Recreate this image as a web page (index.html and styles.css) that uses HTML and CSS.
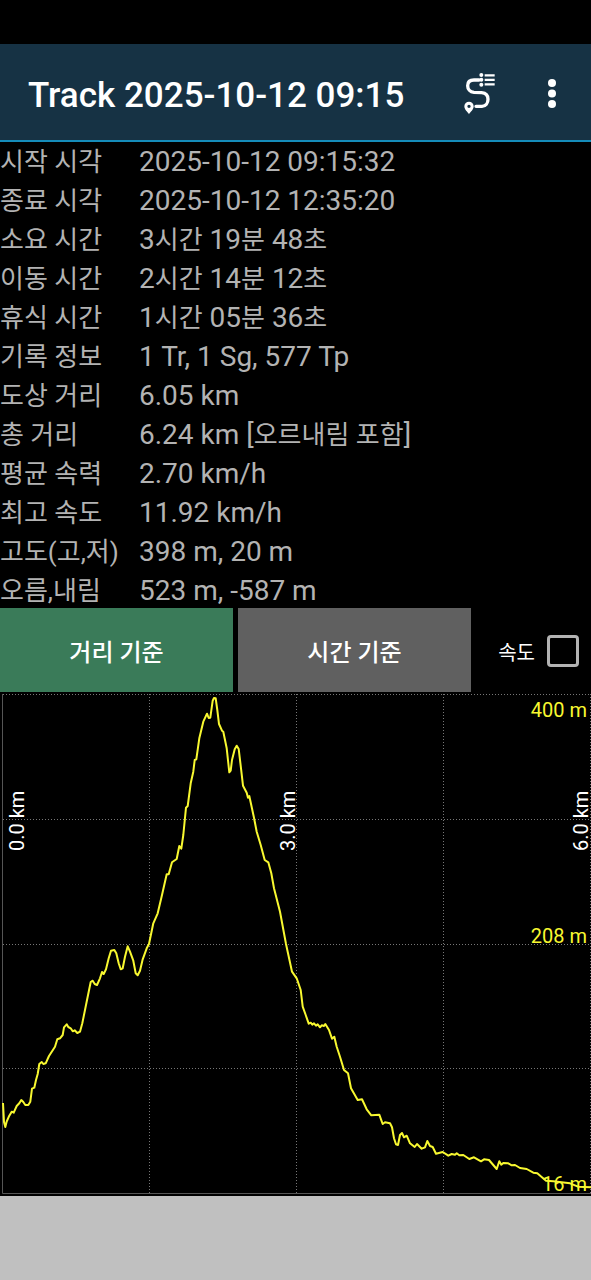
FILE: index.html
```html
<!DOCTYPE html>
<html lang="ko">
<head>
<meta charset="utf-8">
<meta name="viewport" content="width=device-width, initial-scale=1">
<title>Track 2025-10-12 09:15</title>
<link rel="stylesheet" href="styles.css">
</head>
<body>
<header class="app-bar">
  <h1 class="title">Track 2025-10-12 09:15</h1>
  <button class="icon-button" type="button" aria-label="트랙 목록">
    <svg class="icon-route" viewBox="45 38 96 126" aria-hidden="true">
      <path class="route" d="M90 59H75C62 59 56 66 56 76S63 95 75 96L98 97C111 98 117 106 117 117S110 138 99 138H81"/>
      <path class="rows" d="M107 45H137M107 58.500H137M107 72H137"/>
      <circle cx="97" cy="44" r="6"/><circle cx="97" cy="58.500" r="6"/><circle cx="97" cy="73" r="6"/>
      <path fill-rule="evenodd" d="M60 162C56 155 46 148 46 138A14 14 0 0 1 74 138C74 148 64 155 60 162ZM60 133A5 5 0 1 0 60 143A5 5 0 1 0 60 133Z"/>
    </svg>
  </button>
  <button class="icon-button" type="button" aria-label="메뉴">
    <svg class="icon-more" viewBox="0 0 10 32" aria-hidden="true">
      <circle cx="5" cy="5" r="4"/><circle cx="5" cy="15.500" r="4"/><circle cx="5" cy="26" r="4"/>
    </svg>
  </button>
</header>
<main class="content">
  <table class="stats">
    <tbody>
      <tr><th scope="row">시작 시각</th><td>2025-10-12 09:15:32</td></tr>
      <tr><th scope="row">종료 시각</th><td>2025-10-12 12:35:20</td></tr>
      <tr><th scope="row">소요 시간</th><td>3<span class="ko">시간</span> 19<span class="ko">분</span> 48<span class="ko">초</span></td></tr>
      <tr><th scope="row">이동 시간</th><td>2<span class="ko">시간</span> 14<span class="ko">분</span> 12<span class="ko">초</span></td></tr>
      <tr><th scope="row">휴식 시간</th><td>1<span class="ko">시간</span> 05<span class="ko">분</span> 36<span class="ko">초</span></td></tr>
      <tr><th scope="row">기록 정보</th><td>1 Tr, 1 Sg, 577 Tp</td></tr>
      <tr><th scope="row">도상 거리</th><td>6.05 km</td></tr>
      <tr><th scope="row">총 거리</th><td>6.24 km [<span class="ko">오르내림 포함</span>]</td></tr>
      <tr><th scope="row">평균 속력</th><td>2.70 km/h</td></tr>
      <tr><th scope="row">최고 속도</th><td>11.92 km/h</td></tr>
      <tr><th scope="row">고도(고,저)</th><td>398 m, 20 m</td></tr>
      <tr><th scope="row">오름,내림</th><td>523 m, -587 m</td></tr>
    </tbody>
  </table>
  <div class="controls">
    <button class="mode mode-active" type="button">거리 기준</button>
    <button class="mode" type="button">시간 기준</button>
    <label class="speed" for="speed">속도 <input class="check" id="speed" type="checkbox"></label>
  </div>
  <svg class="chart" viewBox="0 692 591 504" role="img" aria-label="고도 그래프">
    <path class="grid" d="M3 694.500H591M3 819.500H591M3 944.500H591M3 1068.500H591M149.500 694V1193M296.500 694V1193M443.500 694V1193M590.500 694V1193"/>
    <path class="axis" d="M2.500 694V1193.500H591"/>
    <text class="alt" x="587" y="717">400 m</text>
    <text class="alt" x="587" y="943">208 m</text>
    <text class="alt" x="587" y="1191">16 m</text>
    <text class="dist" transform="translate(24 851) rotate(-90)">0.0 km</text>
    <text class="dist" transform="translate(295 851) rotate(-90)">3.0 km</text>
    <text class="dist" transform="translate(588 851) rotate(-90)">6.0 km</text>
    <polyline class="profile" points="3,1103 4,1122 5.3,1127 6.7,1121.5 9.3,1115.7 11.7,1111.7 13.7,1112.7 16.7,1106 19.3,1103.3 21.3,1100 23.3,1102 25.3,1105 28.3,1105 30.3,1101.7 32,1088.7 34.3,1087.7 36,1080 37.7,1074 39.3,1064 41.7,1062 43.3,1064 45.7,1063.3 49,1056 55,1046.7 57.3,1039.3 60,1038.3 62.7,1035 64,1027.3 66.7,1024.3 68.3,1027 70.7,1028.3 72.7,1031.3 74.7,1030.3 77.3,1033 80,1031.7 82.3,1023.3 86,1005 90.7,982 92.7,980.7 94.7,984 97,985 100,978.3 102,972 103.7,974 106,969.3 108.7,958.3 111,950.7 114.3,950 116.3,953.3 118.7,963.3 120.7,969.3 122.7,968.3 125,956.7 127.7,946.3 130,951.7 133.3,960.7 135.7,973.3 137.7,975.3 140,970.7 142.7,959.3 146.7,948.3 149,944 153.3,923.3 157.7,913.3 162,895 166.7,874.3 168.7,874.3 172,862.3 176.7,859 179.3,846 181.3,848.7 183.3,835 186,807.7 187.7,806 190.7,783.3 193.3,771.7 194.7,760 196.3,759.3 199.3,738.3 203.3,721.7 207,713.7 208.7,718 210.3,717.7 212.7,700.7 214,698 215.7,698.3 217.3,710 219,724 222,730.7 223.3,731.7 226.7,748.3 229.3,772.3 230.7,770.7 232,760 234.7,749.3 236.7,745.7 238.7,749 241,768.3 243,785.7 246.7,792.7 248,797.7 249.3,796 254,817.7 256.7,831.7 260.7,845 264.7,860 268.3,862.3 271.3,873.3 274,888.3 280,911.7 286,944 292,971.7 296.7,978.3 300.7,990 302.7,1006.7 305.7,1015 308.7,1023.7 310.7,1022.7 312.3,1024.7 314,1023.3 316,1025.7 317.7,1024.3 320,1027.3 321.7,1025.3 324,1026 325.3,1024 329,1030 332,1038.7 334.3,1036.7 336.7,1046.7 340,1056.7 344,1070 348,1073.3 351,1088.3 357.7,1100 362,1099.3 366.7,1109.3 371.3,1115.3 379.3,1114.7 381,1119.3 382.7,1124 385,1122.3 390,1123.3 392,1127.3 394,1138.3 396,1144.3 398,1145 400,1135 402,1133 404,1137.3 406.7,1135.7 410,1143.3 414.7,1147 417,1144 421.7,1148.7 425,1147.3 427.3,1141 430,1146 432.7,1147 436,1153.7 442.7,1152 448.3,1155.7 451.7,1154 455,1154.7 456.7,1153.3 459.3,1155.3 463.3,1155 469.3,1159 474,1157.3 481,1161.3 484,1159.3 489,1160 496.7,1169 499.3,1161.3 501.3,1164.7 503.3,1163 508.3,1163.3 511.7,1165.3 515,1165 520,1168 526.7,1169 533.3,1172.7 537.3,1173.3 546,1180.7 553.3,1181.3 570,1183.3 578,1186.7 591,1187.3"/>
  </svg>
</main>
<footer class="bottom"></footer>
</body>
</html>
```
FILE: styles.css
```css
* {
  box-sizing: border-box;
}

body {
  margin: 0;
  min-height: 100vh;
  padding-top: 44px;
  display: flex;
  flex-direction: column;
  background: #000;
  color: #b3b3b3;
  font-family: Roboto, "Noto Sans CJK KR", sans-serif;
}

button {
  border: 0;
  padding: 0;
  font: inherit;
}

.app-bar {
  display: flex;
  align-items: center;
  height: 98px;
  padding: 4px 3px 0 28px;
  background: #163244;
  border-bottom: 2px solid #158cba;
}

.title {
  flex: 1;
  margin: 0;
  padding-top: 3px;
  color: #fff;
  font-size: 35px;
  line-height: 48px;
  font-weight: 500;
  white-space: nowrap;
}

.icon-button {
  display: flex;
  align-items: center;
  justify-content: center;
  width: 72px;
  height: 72px;
  background: none;
}

.icon-route {
  width: 32px;
  height: 42px;
  fill: #fff;
}

.icon-route .route,
.icon-route .rows {
  fill: none;
  stroke: #fff;
  stroke-width: 10;
  stroke-linecap: round;
}

.icon-route .rows {
  stroke-width: 7;
  stroke-linecap: butt;
}

.icon-more {
  width: 10px;
  height: 32px;
  fill: #fff;
}

.stats {
  width: 100%;
  margin-bottom: -2px;
  border-collapse: collapse;
  table-layout: fixed;
}

.stats th,
.stats td {
  height: 39px;
  padding: 0;
  font-size: 28px;
  line-height: 39px;
  font-weight: 400;
  text-align: left;
  vertical-align: baseline;
  white-space: nowrap;
}

.stats th {
  width: 139px;
  font-size: 26px;
  line-height: 36px;
}

.ko {
  font-size: 26px;
  line-height: 1;
}

.controls {
  position: relative;
  display: flex;
  height: 84px;
  background: #000;
}

.mode {
  flex: 1;
  background: #606060;
  color: #fff;
  font-size: 24px;
  font-weight: 500;
}

.mode-active {
  margin-right: 5px;
  background: #3a7b59;
}

.speed {
  display: flex;
  align-items: center;
  justify-content: flex-end;
  gap: 12px;
  width: 120px;
  padding: 2px 12px 0 0;
  color: #fff;
  font-size: 20px;
}

.check {
  appearance: none;
  width: 32px;
  height: 32px;
  margin: 0;
  border: 3px solid #b3b3b3;
  border-radius: 4px;
}

.chart {
  display: block;
  width: 100%;
}

.grid {
  fill: none;
  stroke: #777;
  stroke-width: 1;
  stroke-dasharray: 1 2;
}

.axis {
  fill: none;
  stroke: #555;
  stroke-width: 1;
}

.profile {
  fill: none;
  stroke: #f8f830;
  stroke-width: 2;
  stroke-linejoin: round;
}

.alt,
.dist {
  font-size: 20px;
}

.alt {
  fill: #f8f830;
  text-anchor: end;
}

.dist {
  fill: #fff;
}

.bottom {
  flex: 1;
  min-height: 48px;
  background: #c0c0c0;
}
```
